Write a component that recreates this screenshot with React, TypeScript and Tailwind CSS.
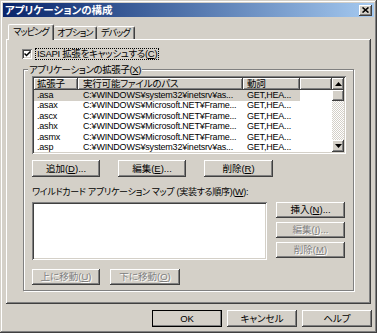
import React from "react";

const FONT = "font-['Liberation_Sans','Noto_Sans_CJK_JP',sans-serif] [font-feature-settings:'palt']";
const RAISED =
  "shadow-[inset_-1px_-1px_0_#404040,inset_1px_1px_0_#ffffff,inset_-2px_-2px_0_#808080,inset_2px_2px_0_#d4d0c8]";
const SUNKEN =
  "shadow-[inset_1px_1px_0_#808080,inset_-1px_-1px_0_#ffffff,inset_2px_2px_0_#404040,inset_-2px_-2px_0_#d4d0c8]";

function M({ children }: { children: React.ReactNode }) {
  return <span className="underline underline-offset-[1px] decoration-[1px]">{children}</span>;
}

function Btn({
  children,
  w,
  h = 17,
  disabled,
  def,
}: {
  children: React.ReactNode;
  w: string;
  h?: number;
  disabled?: boolean;
  def?: boolean;
}) {
  return (
    <div
      className={`${w} ${h === 16 ? "h-[16px]" : "h-[17px]"} shrink-0 flex items-center justify-center bg-[#d4d0c8] text-[9.5px] leading-none ${RAISED} ${
        def ? "outline outline-1 outline-black -outline-offset-1" : ""
      } ${disabled ? "text-[#808080] [text-shadow:1px_1px_0_#ffffff]" : "text-black"}`}
    >
      <span className="whitespace-nowrap">{children}</span>
    </div>
  );
}

function Arrow({ up }: { up?: boolean }) {
  return (
    <div className={`w-[12px] h-[12px] bg-[#d4d0c8] ${RAISED} flex items-center justify-center`}>
      <svg width="7" height="4" viewBox="0 0 7 4">
        {up ? <path d="M3.5 0 L7 4 L0 4 Z" fill="#000" /> : <path d="M0 0 L7 0 L3.5 4 Z" fill="#000" />}
      </svg>
    </div>
  );
}

const rows = [
  [".asa", "C:¥WINDOWS¥system32¥inetsrv¥as...", "GET,HEA..."],
  [".asax", "C:¥WINDOWS¥Microsoft.NET¥Frame...", "GET,HEA..."],
  [".ascx", "C:¥WINDOWS¥Microsoft.NET¥Frame...", "GET,HEA..."],
  [".ashx", "C:¥WINDOWS¥Microsoft.NET¥Frame...", "GET,HEA..."],
  [".asmx", "C:¥WINDOWS¥Microsoft.NET¥Frame...", "GET,HEA..."],
  [".asp", "C:¥WINDOWS¥system32¥inetsrv¥as...", "GET,HEA..."],
  [".aspx", "C:¥WINDOWS¥Microsoft.NET¥Frame...", "GET,HEA..."],
];

function HeaderCell({ w, children, pl }: { w: string; children?: React.ReactNode; pl: string }) {
  return (
    <div className={`${w} h-full shrink-0 ${RAISED} ${pl} flex items-center overflow-hidden whitespace-nowrap`}>
      {children}
    </div>
  );
}

export default function App() {
  return (
    <div className={`${FONT} w-[377px] h-[333px] bg-[#d4d0c8] text-black p-[3px] flex flex-col shadow-[inset_-1px_-1px_0_#404040,inset_1px_1px_0_#d4d0c8,inset_-2px_-2px_0_#808080,inset_2px_2px_0_#ffffff]`}>
      {/* Title bar */}
      <div className="h-[14px] shrink-0 flex items-center justify-between bg-gradient-to-r from-[#0a246a] to-[#a6caf0] pl-[2px] pr-[2px]">
        <span className="text-white font-bold text-[10.5px] leading-none whitespace-nowrap">アプリケーションの構成</span>
        <div className={`w-[13px] h-[11px] bg-[#d4d0c8] ${RAISED} flex items-center justify-center`}>
          <svg width="7" height="6" viewBox="0 0 7 6">
            <path d="M0.5 0.5 L6.5 5.5 M6.5 0.5 L0.5 5.5" stroke="#000" strokeWidth="1.6" />
          </svg>
        </div>
      </div>

      {/* Tabs */}
      <div className="mx-[3px] mt-[6px] flex flex-col">
        <div className="flex items-end pl-[2px] h-[16px] relative z-10 text-[9px] tracking-[-0.8px] leading-none whitespace-nowrap">
          <div className="h-[16px] -mb-[1px] w-[46px] flex items-center justify-center bg-[#d4d0c8] border-t border-l border-white border-r border-r-[#404040] rounded-t-[2px] shadow-[inset_-1px_0_0_#808080] pb-[1px]">
            マッピング
          </div>
          <div className="h-[13px] w-[43px] flex items-center justify-center border-t border-white border-r border-r-[#404040] shadow-[inset_-1px_0_0_#808080] rounded-t-[2px]">
            オプション
          </div>
          <div className="h-[13px] w-[38px] flex items-center justify-center border-t border-white border-r border-r-[#404040] shadow-[inset_-1px_0_0_#808080] rounded-t-[2px]">
            デバッグ
          </div>
        </div>

        {/* Panel */}
        <div className="h-[265px] shadow-[inset_-1px_-1px_0_#404040,inset_1px_1px_0_#ffffff,inset_-2px_-2px_0_#808080] pl-[16px] pt-[9px] flex flex-col text-[9.5px] leading-none">
          <div className="flex items-center h-[11px]">
            <div className={`w-[10px] h-[10px] bg-white ${SUNKEN} flex items-center justify-center`}>
              <svg width="7" height="6" viewBox="0 0 7 6">
                <path d="M0.5 2.5 L2.5 4.5 L6.5 0.5" stroke="#000" strokeWidth="1.5" fill="none" />
              </svg>
            </div>
            <span className="ml-[3px] px-[1px] border border-dotted border-black leading-[10px] tracking-[-0.3px] whitespace-nowrap">
              ISAPI 拡張をキャッシュする(<M>C</M>)
            </span>
          </div>

          {/* Group box */}
          <div className="relative ml-[1px] mt-[10px] w-[331px] h-[222px] border border-[#808080] shadow-[1px_1px_0_#ffffff,inset_1px_1px_0_#ffffff] pl-[8px] pt-[6px] flex flex-col">
            <span className="absolute -top-[6px] left-[4px] px-[1px] bg-[#d4d0c8] leading-[11px] whitespace-nowrap tracking-[-0.4px]">
              アプリケーションの拡張子(<M>X</M>)
            </span>

            {/* List view */}
            <div className={`w-[314px] h-[78px] bg-white ${SUNKEN} p-[2px] flex`}>
              <div className="w-[298px] h-full overflow-hidden flex flex-col">
                <div className="h-[12px] shrink-0 flex bg-[#d4d0c8] tracking-[-0.2px]">
                  <HeaderCell w="w-[44px]" pl="pl-[3px]">拡張子</HeaderCell>
                  <HeaderCell w="w-[165px]" pl="pl-[5px]">実行可能ファイルのパス</HeaderCell>
                  <HeaderCell w="w-[57px]" pl="pl-[4px]">動詞</HeaderCell>
                  <HeaderCell w="w-[32px]" pl="pl-[4px]" />
                </div>
                {rows.map((r, i) => (
                  <div key={i} className="h-[10.5px] shrink-0 flex items-center text-[9px] tracking-[-0.2px]">
                    <div className={`w-[266px] h-full flex items-center ${i === 0 ? "bg-[#d4d0c8]" : ""}`}>
                      <div className="w-[44px] shrink-0 pl-[3px] overflow-hidden whitespace-nowrap">{r[0]}</div>
                      <div className="w-[165px] shrink-0 pl-[5px] overflow-hidden whitespace-nowrap">{r[1]}</div>
                      <div className="w-[57px] shrink-0 pl-[4px] overflow-hidden whitespace-nowrap">{r[2]}</div>
                    </div>
                  </div>
                ))}
              </div>
              {/* Scrollbar */}
              <div className="w-[12px] h-full flex flex-col">
                <Arrow up />
                <div className={`w-[12px] h-[11px] bg-[#d4d0c8] ${RAISED}`} />
                <div className="flex-1 [background-image:repeating-conic-gradient(#d4d0c8_0_25%,#ffffff_0_50%)] [background-size:2px_2px]" />
                <Arrow />
              </div>
            </div>

            {/* Buttons */}
            <div className="mt-[6px] flex gap-[18px]">
              <Btn w="w-[68px]">追加(<M>D</M>)...</Btn>
              <Btn w="w-[68px]">編集(<M>E</M>)...</Btn>
              <Btn w="w-[69px]">削除(<M>R</M>)</Btn>
            </div>

            <div className="mt-[9px] h-[12px] leading-[12px] whitespace-nowrap text-[9px] tracking-[-0.3px]">
              ワイルドカード アプリケーション マップ (実装する順序)(<M>W</M>):
            </div>

            <div className="mt-[4px] flex items-start">
              <div className={`w-[235px] h-[58px] bg-white ${SUNKEN}`} />
              <div className="ml-[9px] flex flex-col gap-[4px]">
                <Btn w="w-[69px]" h={16}>挿入(<M>N</M>)...</Btn>
                <Btn w="w-[69px]" h={16} disabled>編集(<M>I</M>)...</Btn>
                <Btn w="w-[69px]" h={16} disabled>削除(<M>M</M>)</Btn>
              </div>
            </div>

            <div className="mt-[9px] flex gap-[10px]">
              <Btn w="w-[68px]" h={16} disabled>上に移動(<M>U</M>)</Btn>
              <Btn w="w-[70px]" h={16} disabled>下に移動(<M>O</M>)</Btn>
            </div>
          </div>
        </div>
      </div>

      {/* Bottom buttons */}
      <div className="mt-[6px] flex justify-end gap-[5px] pr-[2px]">
        <Btn w="w-[70px]" def>OK</Btn>
        <Btn w="w-[70px]">キャンセル</Btn>
        <Btn w="w-[70px]">ヘルプ</Btn>
      </div>
    </div>
  );
}
